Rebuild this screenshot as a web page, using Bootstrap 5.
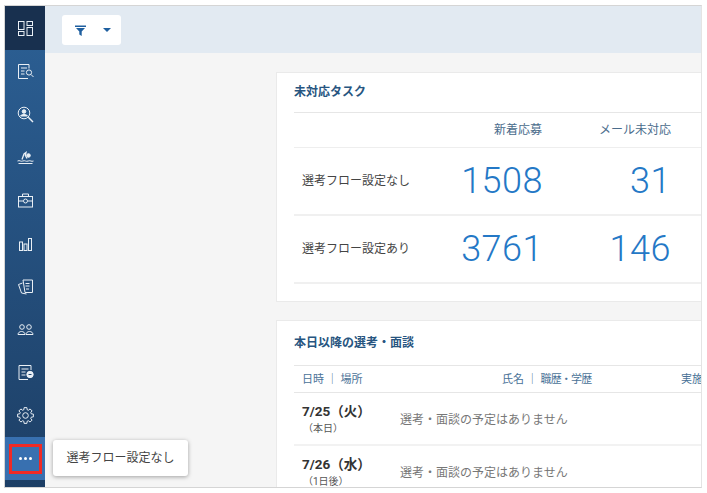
<!DOCTYPE html>
<html lang="ja"><head><meta charset="utf-8"><title>ダッシュボード</title>
<link href="https://cdn.jsdelivr.net/npm/bootstrap@5.3.0/dist/css/bootstrap.min.css" rel="stylesheet">
<style>
html,body{height:100%;margin:0;background:#fff;overflow:hidden}
body{font-family:"Roboto","Noto Sans CJK JP",sans-serif;padding:5px 4px 5px 4px}
.frame{width:698px;height:483px;border:1px solid #d5d5d5;border-right-color:#e4e4e4;overflow:hidden;background:#f5f5f5}
.side{width:40px;flex:none;background:linear-gradient(#2c6095,#1d3f66);position:relative}
.side-item{height:43px;color:#fff}
.side-item svg{width:17px;height:17px;fill:none;stroke:#e9eff5;stroke-width:1}
.side-top{height:44px;background:#18304f}
.side-more{background:#3870b0;height:43px}
.more-box{width:33px;height:30px;border:3px solid #f02a25;font-size:0;gap:2px}
.more-box i{width:3px;height:3px;border-radius:50%;background:#fff}
.topbar{height:47px;background:#e2eaf2;padding:9px 0 0 17px}
.filter-btn{width:59px;height:30px;border-radius:3px;padding:0 10px 0 13px}
.caret-down{width:0;height:0;border:4px solid transparent;border-top:4px solid #1f5f9f;border-bottom:0}
.content{padding:19px 0 0 231px}
.panel{background:#fff;border:1px solid #eaeaea;padding:0 0 0 17px;width:500px}
.panel1{height:230px;margin-bottom:18px}
.panel2{height:200px}
.panel-title{font-size:12px;font-weight:700;color:#275580;height:40px;line-height:38px;border-bottom:1px solid #e6e6e6}
.panel2 .panel-title{height:45px;line-height:44px}
.head-row{height:35px;border-bottom:1px solid #eeeeee;font-size:12px;color:#4a6c8c;line-height:35px}
.num-row{height:68px;border-bottom:2px solid #f0f0f0;align-items:center}
.cell-label{width:150px;padding-left:8px;font-size:12px;color:#444}
.cell-a{width:99px;text-align:right}
.cell-b{width:128px;text-align:right}
.head-row .cell-a{padding-right:1px}
.big-num{font-family:"Roboto",sans-serif;font-size:36px;font-weight:300;color:#2478c6;line-height:1;letter-spacing:.5px}
.head2{height:27px;border-bottom:1px solid #e6e6e6;font-size:11px;color:#4a7297;line-height:27px;position:relative}
.h2a{width:107px;padding-left:8px}
.h2b{width:280px;padding-left:101px}
.tight{letter-spacing:-.8px}
.day-row{height:53px;border-bottom:2px solid #f2f2f2}
.day-col{width:106px;padding:8px 0 0 8px}
.day-d{font-size:13.500px;font-weight:700;color:#333;line-height:21px}
.day-s{font-size:10px;color:#555;line-height:14px;padding-left:1px}
.none-msg{font-size:12px;color:#777;padding-top:19px;line-height:16px}
.tip{position:absolute;left:48px;bottom:11px;width:135px;height:36px;background:#fff;border-radius:3px;box-shadow:0 1px 4px rgba(0,0,0,.35);font-size:12px;color:#444;z-index:5}
</style></head>
<body>
<div class="frame d-flex position-relative">
 <nav class="side d-flex flex-column">
  <div class="side-top d-flex align-items-center justify-content-center"><svg width="17" height="17" viewBox="0 0 17 17" fill="none" stroke="#e9eff5" stroke-width="1"><rect x="1.500" y="1.500" width="5.500" height="8"/><rect x="1.500" y="11.500" width="5.500" height="4"/><rect x="10" y="1.500" width="5.500" height="4"/><rect x="10" y="7.500" width="5.500" height="8"/></svg></div>
  <div class="side-item d-flex align-items-center justify-content-center"><svg viewBox="0 0 17 17"><path d="M12 5.500V1.500H1.500v14H11"/><path d="M4 5h6M4 8h3.500M4 11h3.500"/><circle cx="12" cy="9.500" r="2.600"/><path d="M14 11.500l2.500 2.500"/></svg></div>
  <div class="side-item d-flex align-items-center justify-content-center"><svg viewBox="0 0 17 17"><circle cx="7" cy="7" r="5.800"/><circle cx="7" cy="5.500" r="1.800" fill="#e9eff5"/><path d="M3.500 10c1-2 6-2 7 0z" fill="#e9eff5"/><path d="M11.300 11.300l4.700 4.700" stroke-width="1.500"/></svg></div>
  <div class="side-item d-flex align-items-center justify-content-center"><svg viewBox="0 0 17 17"><circle cx="11.500" cy="6.500" r="1.800" fill="#e9eff5"/><path d="M5 10.500L7 5l2-1.500-.6 3L10 9.500" stroke-width="1.300"/><path d="M.5 12c2.500-1.200 3 1 5.300 0s3 1 5.400 0 3 1 5.300 0M1.500 14.500h14"/></svg></div>
  <div class="side-item d-flex align-items-center justify-content-center"><svg viewBox="0 0 17 17"><rect x="1.500" y="4.500" width="14" height="10.500"/><path d="M5.500 4.500V2h6v2.500M1.500 9h4.500M11 9h4.500"/><circle cx="8.500" cy="9" r="2"/></svg></div>
  <div class="side-item d-flex align-items-center justify-content-center"><svg viewBox="0 0 17 17"><rect x="2.500" y="7" width="3" height="8.500"/><rect x="7" y="9" width="3" height="6.500"/><rect x="11.500" y="3.500" width="3" height="12"/></svg></div>
  <div class="side-item d-flex align-items-center justify-content-center"><svg viewBox="0 0 17 17"><path d="M6 2h9.500v12.500H8z"/><path d="M5.500 5L1.500 6.500l3 8.500 5 1"/><path d="M8.500 5.500h4M8.500 8h4M9 11h3"/></svg></div>
  <div class="side-item d-flex align-items-center justify-content-center"><svg viewBox="0 0 17 17"><circle cx="5" cy="6" r="2.300"/><circle cx="12" cy="6" r="2.300"/><path d="M1 13.500c0-4 7-4 7 0zM9 13.500c0-4 7-4 7 0z"/></svg></div>
  <div class="side-item d-flex align-items-center justify-content-center"><svg viewBox="0 0 17 17"><path d="M14 6V1.500H2v14h9"/><path d="M4.500 5h7M4.500 8h4M4.500 11h4"/><circle cx="13" cy="10.500" r="3.200" fill="#e9eff5"/><path d="M11.500 10.500h3" stroke="#1f4670"/></svg></div>
  <div class="side-item d-flex align-items-center justify-content-center"><svg viewBox="0 0 17 17"><g transform="translate(8.500 8.500)"><polygon points="-1.650,-5.770 -1.390,-7.880 1.390,-7.880 1.650,-5.770 2.910,-5.250 4.590,-6.550 6.550,-4.590 5.250,-2.910 5.770,-1.650 7.880,-1.390 7.880,1.390 5.770,1.650 5.250,2.910 6.550,4.590 4.590,6.550 2.910,5.250 1.650,5.770 1.390,7.880 -1.390,7.880 -1.650,5.770 -2.910,5.250 -4.590,6.550 -6.550,4.590 -5.250,2.910 -5.770,1.650 -7.880,1.390 -7.880,-1.390 -5.770,-1.650 -5.250,-2.910 -6.550,-4.590 -4.590,-6.550 -2.910,-5.250"/><circle r="2.800"/></g></svg></div>
  <div class="side-more d-flex align-items-center justify-content-center"><div class="more-box d-flex align-items-center justify-content-center"><i></i><i></i><i></i></div></div>
 </nav>
 <div class="flex-grow-1 overflow-hidden">
  <div class="topbar">
   <div class="filter-btn bg-white d-flex align-items-center justify-content-between">
    <svg width="11" height="11" viewBox="0 0 11 11" fill="#1f5f9f"><path d="M0 .5h11v1.500H0zM1 3h9L6.700 6.500V11L4.300 9.500v-3z"/></svg>
    <span class="caret-down"></span>
   </div>
  </div>
  <div class="content">
   <section class="panel panel1">
    <div class="panel-title">未対応タスク</div>
    <div class="head-row d-flex"><div class="cell-label"></div><div class="cell-a">新着応募</div><div class="cell-b">メール未対応</div></div>
    <div class="num-row d-flex"><div class="cell-label">選考フロー設定なし</div><div class="cell-a big-num">1508</div><div class="cell-b big-num">31</div></div>
    <div class="num-row d-flex"><div class="cell-label">選考フロー設定あり</div><div class="cell-a big-num">3761</div><div class="cell-b big-num">146</div></div>
   </section>
   <section class="panel panel2">
    <div class="panel-title">本日以降の選考・面談</div>
    <div class="head2 d-flex text-nowrap"><div class="h2a">日時 ｜ 場所</div><div class="h2b">氏名 ｜ <span class="tight">職歴・学歴</span></div><div>実施</div></div>
    <div class="day-row d-flex"><div class="day-col"><div class="day-d">7/25（火）</div><div class="day-s">（本日）</div></div><div class="none-msg">選考・面談の予定はありません</div></div>
    <div class="day-row d-flex"><div class="day-col"><div class="day-d">7/26（水）</div><div class="day-s">（1日後）</div></div><div class="none-msg">選考・面談の予定はありません</div></div>
   </section>
  </div>
 </div>
 <div class="tip d-flex align-items-center justify-content-center">選考フロー設定なし</div>
</div>
</body></html>
